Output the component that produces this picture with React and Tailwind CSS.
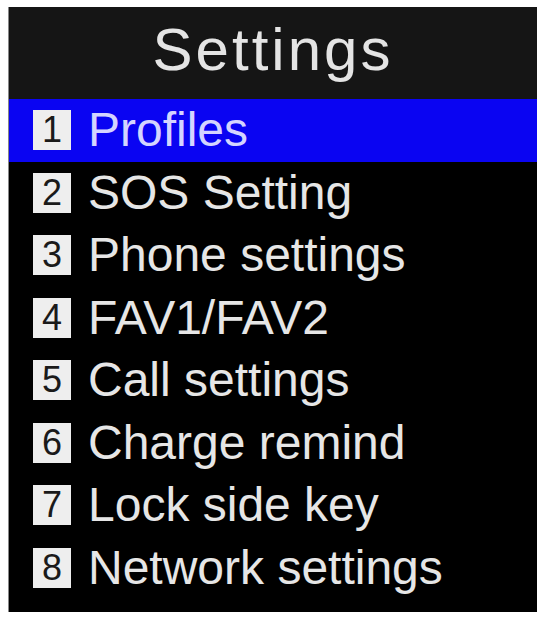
const items = [
  "Profiles",
  "SOS Setting",
  "Phone settings",
  "FAV1/FAV2",
  "Call settings",
  "Charge remind",
  "Lock side key",
  "Network settings",
];

function Row({ num, label, active }) {
  return (
    <div
      className={`h-[62.5px] flex items-center pl-[24px] ${
        active ? "bg-[#0a04f2]" : "bg-black"
      }`}
    >
      <span className="w-[38px] h-[40px] bg-[#eeeeee] flex items-center justify-center text-[36px] leading-none text-[#1a1a1a]">
        {num}
      </span>
      <span
        className={`ml-[17px] text-[48px] leading-none whitespace-nowrap ${
          active ? "text-[#d4d4ff]" : "text-[#e6e6e6]"
        }`}
      >
        {label}
      </span>
    </div>
  );
}

export default function App() {
  return (
    <div
      className="w-[537px] h-[617px] bg-white pt-[7px] pl-[8px] pb-[5px] overflow-hidden"
      style={{ fontFamily: '"Liberation Sans", Arial, sans-serif' }}
    >
      <div className="h-full bg-black border-l border-[#888] flex flex-col">
        <div className="h-[92px] bg-[#151515] flex items-center justify-center">
          <span className="text-[60px] leading-none tracking-[3px] text-[#e4e4e4] -mt-[6px]">
            Settings
          </span>
        </div>
        {items.map((label, i) => (
          <Row key={label} num={i + 1} label={label} active={i === 0} />
        ))}
      </div>
    </div>
  );
}
